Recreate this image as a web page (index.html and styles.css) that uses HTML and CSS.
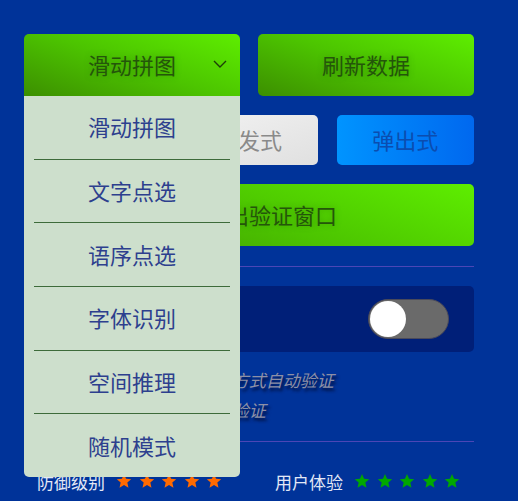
FILE: index.html
```html
<!DOCTYPE html>
<html lang="zh-CN">
<head>
<meta charset="utf-8">
<link rel="stylesheet" href="styles.css">
</head>
<body>
<div class="app">
  <div class="row-top">
    <div class="select">
      <div class="btn green select-head">
        <span>滑动拼图</span>
        <svg class="chev" width="14" height="8" viewBox="0 0 14 8"><polyline points="1,1 7,7 13,1" fill="none" stroke="#1d3f08" stroke-width="1.4"/></svg>
      </div>
      <ul class="menu">
        <li>滑动拼图</li>
        <li>文字点选</li>
        <li>语序点选</li>
        <li>字体识别</li>
        <li>空间推理</li>
        <li>随机模式</li>
      </ul>
    </div>
    <div class="btn green">刷新数据</div>
  </div>
  <div class="row-mode">
    <div class="btn small green">嵌入式</div>
    <div class="btn small grey">触发式</div>
    <div class="btn small blue">弹出式</div>
  </div>
  <div class="btn green wide">点击弹出验证窗口</div>
  <hr class="divider">
  <div class="panel">
    <span class="panel-label">无感验证</span>
    <span class="toggle"><span class="knob"></span></span>
  </div>
  <div class="notes">
    <p>开启后,触发式将以无感方式自动验证</p>
    <p>关闭后,用户需手动完成验证</p>
  </div>
  <hr class="divider">
  <div class="stats">
    <div class="stat">
      <span class="stat-label">防御级别</span>
      <span class="stars orange">
        <svg viewBox="0 0 24 24"><polygon points="12,1.5 15.1,8.6 22.8,9.3 17,14.4 18.7,22 12,18 5.3,22 7,14.4 1.2,9.3 8.9,8.6"/></svg>
        <svg viewBox="0 0 24 24"><polygon points="12,1.5 15.1,8.6 22.8,9.3 17,14.4 18.7,22 12,18 5.3,22 7,14.4 1.2,9.3 8.9,8.6"/></svg>
        <svg viewBox="0 0 24 24"><polygon points="12,1.5 15.1,8.6 22.8,9.3 17,14.4 18.7,22 12,18 5.3,22 7,14.4 1.2,9.3 8.9,8.6"/></svg>
        <svg viewBox="0 0 24 24"><polygon points="12,1.5 15.1,8.6 22.8,9.3 17,14.4 18.7,22 12,18 5.3,22 7,14.4 1.2,9.3 8.9,8.6"/></svg>
        <svg viewBox="0 0 24 24"><polygon points="12,1.5 15.1,8.6 22.8,9.3 17,14.4 18.7,22 12,18 5.3,22 7,14.4 1.2,9.3 8.9,8.6"/></svg>
      </span>
    </div>
    <div class="stat">
      <span class="stat-label">用户体验</span>
      <span class="stars greenstar">
        <svg viewBox="0 0 24 24"><polygon points="12,1.5 15.1,8.6 22.8,9.3 17,14.4 18.7,22 12,18 5.3,22 7,14.4 1.2,9.3 8.9,8.6"/></svg>
        <svg viewBox="0 0 24 24"><polygon points="12,1.5 15.1,8.6 22.8,9.3 17,14.4 18.7,22 12,18 5.3,22 7,14.4 1.2,9.3 8.9,8.6"/></svg>
        <svg viewBox="0 0 24 24"><polygon points="12,1.5 15.1,8.6 22.8,9.3 17,14.4 18.7,22 12,18 5.3,22 7,14.4 1.2,9.3 8.9,8.6"/></svg>
        <svg viewBox="0 0 24 24"><polygon points="12,1.5 15.1,8.6 22.8,9.3 17,14.4 18.7,22 12,18 5.3,22 7,14.4 1.2,9.3 8.9,8.6"/></svg>
        <svg viewBox="0 0 24 24"><polygon points="12,1.5 15.1,8.6 22.8,9.3 17,14.4 18.7,22 12,18 5.3,22 7,14.4 1.2,9.3 8.9,8.6"/></svg>
      </span>
    </div>
  </div>
</div>
</body>
</html>
```
FILE: styles.css
```css
* { box-sizing: border-box; }
html, body {
  margin: 0;
  background: #003399;
  height: 100%;
  overflow: hidden;
}
body {
  font-family: "Noto Sans CJK SC", "Noto Sans", sans-serif;
}
.app {
  width: 450px;
  margin-left: 24px;
  padding-top: 34px;
}
.row-top {
  display: grid;
  grid-template-columns: 1fr 1fr;
  gap: 18px;
}
.btn {
  display: flex;
  align-items: center;
  justify-content: center;
  height: 62px;
  border-radius: 5px;
  font-size: 22px;
  line-height: 1;
  padding-bottom: 3px;
}
.green {
  background: linear-gradient(20deg, #3c8f00 0%, #4cc400 50%, #5eee00 100%);
  color: #24560a;
  text-shadow: 0 0 6px rgba(40, 110, 0, 0.45);
}
.select {
  position: relative;
}
.select-head {
  position: relative;
  border-radius: 5px 5px 0 0;
}
.chev {
  position: absolute;
  right: 13px;
  top: 26px;
}
.menu {
  position: absolute;
  top: 62px;
  left: 0;
  width: 100%;
  margin: 0;
  padding: 0;
  list-style: none;
  background: #cddfcc;
  border-radius: 0 0 5px 5px;
  z-index: 5;
}
.menu li {
  height: 63.7px;
  display: flex;
  align-items: center;
  justify-content: center;
  font-size: 22px;
  color: #2d3f8e;
  margin: 0 10px;
  border-top: 1px solid #3d6b3a;
  padding-bottom: 2px;
}
.menu li:first-child {
  border-top: none;
  height: 62.7px;
}
.row-mode {
  display: grid;
  grid-template-columns: repeat(3, 1fr);
  gap: 19px;
  margin-top: 19px;
}
.small {
  height: 50px;
}
.grey {
  background: linear-gradient(160deg, #f2f2f2, #e0e0e0);
  color: #8a8a8a;
}
.blue {
  background: linear-gradient(90deg, #0094ff, #0068ef);
  color: #0b4db0;
}
.wide {
  margin-top: 19px;
}
.divider {
  border: none;
  height: 1px;
  background: #4b46b6;
  margin: 20px 0 0;
}
.panel {
  margin-top: 19px;
  height: 66px;
  border-radius: 5px;
  background: #001f78;
  display: flex;
  align-items: center;
  justify-content: space-between;
  padding: 0 25px 0 16px;
}
.panel-label {
  color: #e6ebf7;
  font-size: 18px;
}
.toggle {
  width: 81px;
  height: 40px;
  border-radius: 20px;
  background: #6a6a6a;
  border: 1px solid #4a4a5a;
  display: flex;
  align-items: center;
  padding-left: 1px;
}
.knob {
  width: 36px;
  height: 36px;
  border-radius: 50%;
  background: #ffffff;
}
.notes {
  padding: 13px 0 0 33px;
}
.notes p {
  margin: 0;
  font-size: 17px;
  line-height: 30px;
  font-style: italic;
  color: #8d90a6;
  text-shadow: 2px 3px 3px #00103f;
}
.notes + .divider {
  margin-top: 16px;
}
.stats {
  display: flex;
  gap: 53px;
  padding-left: 13px;
  margin-top: 27px;
}
.stat {
  display: flex;
  align-items: center;
  height: 24px;
}
.stat-label {
  font-size: 17px;
  color: #e3e8f6;
  margin-right: 11px;
}
.stars {
  display: flex;
  gap: 6.5px;
}
.stars svg {
  width: 16px;
  height: 16px;
}
.orange svg { fill: #ff6a00; }
.greenstar svg { fill: #00a800; }
```
